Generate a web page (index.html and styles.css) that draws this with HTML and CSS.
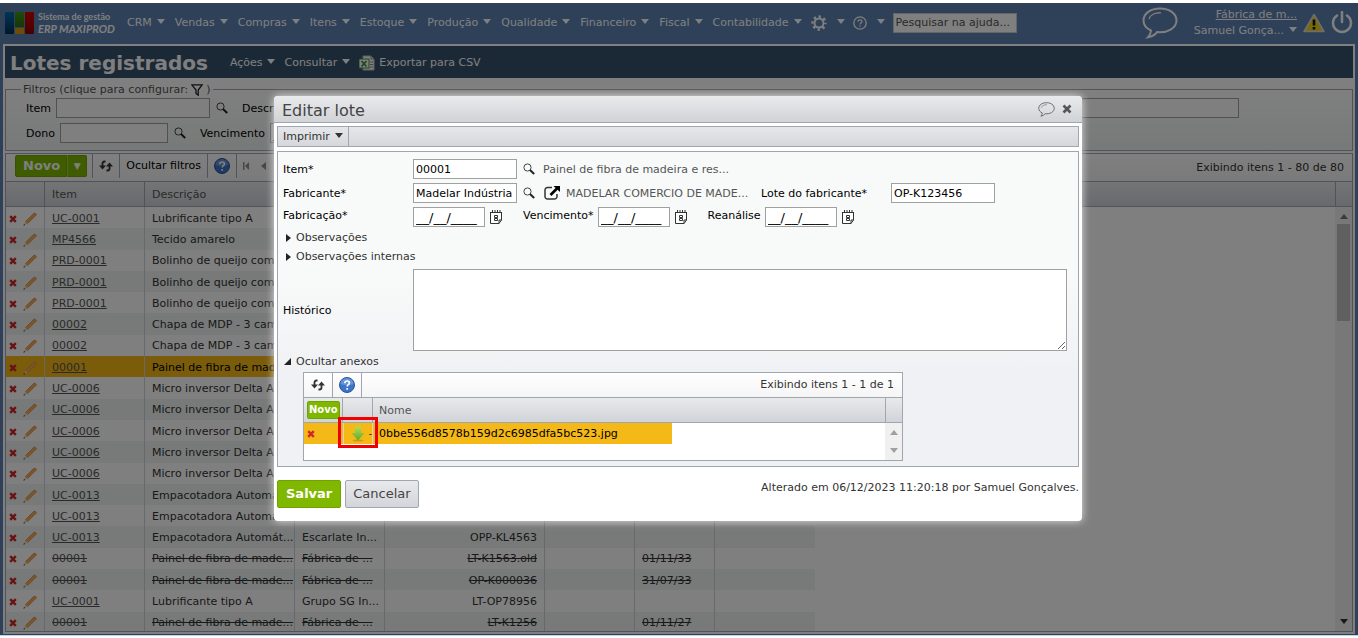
FILE: index.html
```html
<!DOCTYPE html>
<html lang="pt-BR">
<head>
  <meta charset="UTF-8">
  <meta name="viewport" content="width=device-width, initial-scale=1.0">
  <title>Lotes registrados</title>
  <link rel="stylesheet" href="styles.css">
</head>
<body>
  <svg class="sprite" aria-hidden="true">
    <symbol id="i-search" viewBox="0 0 12 12"><circle cx="4.5" cy="4.5" r="3.6" fill="none" stroke="#444" stroke-width="1"/><path d="M7 7l4.200 4" stroke="#222" stroke-width="2"/></symbol>
    <symbol id="i-refresh" viewBox="0 0 14 12"><path d="M6.500 1.500H5.500C4 1.500 3.500 2.300 3.500 3.500V7M7.500 10.500h1c1.500 0 2-.8 2-2V5" fill="none" stroke="#333" stroke-width="1.800"/><path d="M0 5.500h7L3.500 9.500zM7 6.500h7L10.500 2.500z" fill="#333"/></symbol>
    <symbol id="i-help" viewBox="0 0 16 16"><circle cx="8" cy="8" r="7.500" fill="#3b74c9" stroke="#2a5396"/><path d="M1.500 7a6.500 6 0 0 1 13 0c-3 1.500-10 1.500-13 0z" fill="#82a9e4" opacity=".6"/><path d="M5.800 6.200c0-3 4.600-2.800 4.600-.2 0 1.700-2.200 1.700-2.200 3.500M8.200 11v1.800" fill="none" stroke="#fff" stroke-width="1.700"/></symbol>
    <symbol id="i-x" viewBox="0 0 8 8"><path d="M1.200 1.200l5.600 5.600M6.800 1.200L1.200 6.800" stroke="#d02828" stroke-width="2.400"/></symbol>
    <symbol id="i-pencil" viewBox="0 0 14 14"><path d="M2.500 9.500L10.500 1.500Q12 .5 13 2t-.7 2L4.700 11.500z" fill="#f2a85a" stroke="#d98a3a" stroke-width=".7"/><path d="M2.500 9.500L.8 13.200l3.900-1.700z" fill="#f2d3a0"/><path d="M.5 13.700l.5-1.700 1.200 1z" fill="#333"/></symbol>
    <symbol id="i-cal" viewBox="0 0 12 14"><path d="M.5 2.500h11V10L9 13.500H.5z" fill="#fff" stroke="#333"/><path d="M11.500 10H9v3.500" fill="none" stroke="#333"/><path d="M0 2.500h12M2.500 0v3M5 0v2M7.500 0v2M10 0v3" stroke="#333"/><path d="M4.500 5.500h3v2h-3zM4.500 8.500h3v2h-3z" fill="none" stroke="#333"/></symbol>
    <symbol id="i-bubble" viewBox="0 0 36 32"><path d="M18 1.500C8.500 1.500 1.500 6.500 1.500 13.500c0 4.500 3 8 7.500 10-.3 2.600-1.200 5-3 6.800 4-.7 7-2.500 9-5.200 10.500 1 19.500-4 19.500-11.600C34.500 6.500 27.500 1.500 18 1.500z" fill="none" stroke="currentColor" stroke-width="2"/><path d="M7 12c1-4 6-6.500 12-6.200" fill="none" stroke="currentColor" stroke-width="1.300"/></symbol>
  </svg>

  <div class="app">
    <header class="topbar">
      <a class="logo" href="#">
        <svg width="30" height="22" viewBox="0 0 30 22">
          <defs>
            <linearGradient id="lb" x2="0" y2="1"><stop stop-color="#006cb0"/><stop offset="1" stop-color="#003050"/></linearGradient>
            <linearGradient id="lr" x2="0" y2="1"><stop stop-color="#d40000"/><stop offset="1" stop-color="#8c0000"/></linearGradient>
            <linearGradient id="lg" x2="0" y2="1"><stop stop-color="#3f9a10"/><stop offset="1" stop-color="#2a6c10"/></linearGradient>
          </defs>
          <rect width="9" height="22" rx="1" fill="url(#lb)"/><rect x="10" width="9" height="15" rx="1" fill="url(#lg)"/><rect x="10" y="16" width="9" height="6" rx="1" fill="#d79a10"/><rect x="20" width="9" height="22" rx="1" fill="url(#lr)"/>
        </svg>
        <span class="logo-text">Sistema de gestão<em>ERP MAXIPROD</em></span>
      </a>
      <nav class="menu">
        <a class="caret" href="#">CRM</a>
        <a class="caret" href="#">Vendas</a>
        <a class="caret" href="#">Compras</a>
        <a class="caret" href="#">Itens</a>
        <a class="caret" href="#">Estoque</a>
        <a class="caret" href="#">Produção</a>
        <a class="caret" href="#">Qualidade</a>
        <a class="caret" href="#">Financeiro</a>
        <a class="caret" href="#">Fiscal</a>
        <a class="caret" href="#">Contabilidade</a>
      </nav>
      <div class="tools">
        <a class="caret" href="#" aria-label="Configurações"><svg width="16" height="16" viewBox="0 0 16 16"><circle cx="8" cy="8" r="4.500" fill="none" stroke="#fff" stroke-width="2"/><circle cx="8" cy="8" r="6.500" fill="none" stroke="#fff" stroke-width="2.400" stroke-dasharray="2.400 2.705" stroke-dashoffset="1.200"/></svg></a>
        <a class="caret" href="#" aria-label="Ajuda"><svg width="14" height="14" viewBox="0 0 14 14"><circle cx="7" cy="7" r="6.200" fill="none" stroke="#fff" stroke-width="1.300"/><path d="M5 5.700c0-2.500 4-2.300 4-.1C9 7 7 7 7 8.500M7 9.500v1.300" fill="none" stroke="#fff" stroke-width="1.200"/></svg></a>
        <input class="help-search" type="text" value="Pesquisar na ajuda..." aria-label="Pesquisar na ajuda">
      </div>
      <div class="account">
        <svg class="chat" width="36" height="32"><use href="#i-bubble"/></svg>
        <div class="user">
          <a class="company" href="#">Fábrica de m...</a>
          <a class="caret" href="#">Samuel Gonça...</a>
        </div>
        <svg width="22" height="20" viewBox="0 0 22 20"><path d="M11 1.500L21 18.500H1z" fill="#f2d21c" stroke="#ddd" stroke-width="1.500" stroke-linejoin="round"/><path d="M11 6.500v6M11 14v2.500" stroke="#111" stroke-width="2.600"/></svg>
        <svg width="22" height="24" viewBox="0 0 22 24"><path d="M6 4.500a9 9 0 1 0 10 0M11 1v10" fill="none" stroke="#fff" stroke-width="2.500" stroke-linecap="round"/></svg>
      </div>
    </header>

    <main class="page">
      <div class="titlebar">
        <h1>Lotes registrados</h1>
        <a class="caret" href="#">Ações</a>
        <a class="caret" href="#">Consultar</a>
        <a class="export" href="#"><svg width="16" height="16" viewBox="0 0 16 16"><path d="M4 1h8l3 3v11H4z" fill="#fff" stroke="#bbb"/><path d="M12 1v3h3M11 7h3M11 9.500h3M11 12h3" fill="none" stroke="#888"/><rect y="4" width="10" height="9" fill="#fff" stroke="#3f8f3a"/><path d="M2.500 6l5 5.500M7.500 6l-5 5.500" stroke="#3f8f3a" stroke-width="1.800"/></svg>Exportar para CSV</a>
      </div>

      <fieldset class="filters">
        <legend>Filtros (clique para configurar: <svg width="12" height="12" viewBox="0 0 12 12"><path d="M.8.800h10.400L7.200 6v5.200L5 9.500V6z" fill="none" stroke="#222" stroke-width="1.300"/></svg> )</legend>
        <div class="filter-row">
          <label for="fItem">Item</label>
          <input id="fItem" class="w-item" type="text">
          <svg class="lens" width="12" height="12"><use href="#i-search"/></svg>
          <label for="fDesc" class="next">Descrição</label>
          <input id="fDesc" class="w-desc" type="text">
        </div>
        <div class="filter-row">
          <label for="fDono">Dono</label>
          <input id="fDono" class="w-dono" type="text">
          <svg class="lens" width="12" height="12"><use href="#i-search"/></svg>
          <label for="fVenc" class="next">Vencimento</label>
          <input id="fVenc" class="date" type="text" value="__/__/____">
        </div>
      </fieldset>

      <section class="grid">
        <div class="grid-tools">
          <div class="tool split"><button type="button" class="novo">Novo</button><button type="button" class="novo more" aria-label="Mais opções">▼</button></div>
          <button type="button" class="tool" aria-label="Atualizar"><svg width="14" height="12"><use href="#i-refresh"/></svg></button>
          <button type="button" class="tool">Ocultar filtros</button>
          <button type="button" class="tool" aria-label="Ajuda"><svg width="16" height="16"><use href="#i-help"/></svg></button>
          <button type="button" class="tool pager" aria-label="Página anterior"><svg width="24" height="8" viewBox="0 0 24 8"><path d="M0 0h1.500v8H0zM6 0v8L2 4zM23 0v8L18 4z" fill="#8a8f98"/></svg></button>
          <span class="count">Exibindo itens 1 - 80 de 80</span>
        </div>
        <div class="grid-head">
          <span class="c-act"></span><span class="c-item">Item</span><span class="c-desc">Descrição</span><span class="c-rest"></span><span class="c-bar"></span>
        </div>
        <div class="grid-body">
          <div class="rows">
            <table class="lots">
              <colgroup><col class="c-act"><col class="c-item"><col class="c-desc"><col class="c-maker"><col class="c-lot"><col class="c-made"><col class="c-due"><col class="c-check"></colgroup>
              <tbody id="lots"></tbody>
            </table>
          </div>
          <div class="scroll">
            <svg width="8" height="5" viewBox="0 0 8 5"><path d="M0 5h8L4 0z" fill="#777"/></svg>
            <div class="thumb"></div>
            <svg width="8" height="5" viewBox="0 0 8 5"><path d="M0 0h8L4 5z" fill="#333"/></svg>
          </div>
        </div>
      </section>
    </main>

    <div class="overlay"></div>

    <form class="dialog" role="dialog" aria-labelledby="dlgTitle">
      <div class="dialog-head">
        <h2 id="dlgTitle">Editar lote</h2>
        <svg class="comment" width="17" height="15"><use href="#i-bubble"/></svg>
        <button type="button" class="plain" aria-label="Fechar"><svg width="10" height="10" viewBox="0 0 10 10"><path d="M1.500 1.500l7 7M8.500 1.500l-7 7" stroke="#555" stroke-width="2.600"/></svg></button>
      </div>
      <div class="dialog-tools"><button type="button" class="caret">Imprimir</button></div>

      <div class="panel">
        <div class="field">
          <label for="item">Item*</label>
          <input id="item" class="w-std" type="text" value="00001">
          <svg class="lens" width="12" height="12"><use href="#i-search"/></svg>
          <span class="info">Painel de fibra de madeira e res...</span>
        </div>
        <div class="field">
          <label for="maker">Fabricante*</label>
          <input id="maker" class="w-std" type="text" value="Madelar Indústria">
          <svg class="lens" width="12" height="12"><use href="#i-search"/></svg>
          <svg class="open" width="16" height="14" viewBox="0 0 16 14"><path d="M8 1.500H3.500a2.500 2.500 0 0 0-2.500 2.500v6.500A2.500 2.500 0 0 0 3.500 13h7a2.500 2.500 0 0 0 2.500-2.500V8" fill="none" stroke="#333" stroke-width="1.500"/><path d="M6.500 9L13 2.500" stroke="#000" stroke-width="2.600"/><path d="M9.500 0H16v6z" fill="#000"/></svg>
          <span class="maker-name">MADELAR COMERCIO DE MADE...</span>
          <label for="lot" class="lot-label">Lote do fabricante*</label>
          <input id="lot" class="w-std" type="text" value="OP-K123456">
        </div>
        <div class="field dates">
          <label for="made">Fabricação*</label>
          <input id="made" class="date" type="text" value="__/__/____">
          <svg class="cal" width="12" height="14"><use href="#i-cal"/></svg>
          <label for="due" class="side">Vencimento*</label>
          <input id="due" class="date" type="text" value="__/__/____">
          <svg class="cal" width="12" height="14"><use href="#i-cal"/></svg>
          <label for="check" class="side">Reanálise</label>
          <input id="check" class="date" type="text" value="__/__/____">
          <svg class="cal" width="12" height="14"><use href="#i-cal"/></svg>
        </div>
        <button type="button" class="fold">Observações</button>
        <button type="button" class="fold">Observações internas</button>
        <div class="field history">
          <label for="hist">Histórico</label>
          <textarea id="hist"></textarea>
        </div>
        <button type="button" class="fold is-open">Ocultar anexos</button>

        <section class="files">
          <div class="files-tools">
            <button type="button" class="tool" aria-label="Atualizar"><svg width="14" height="12"><use href="#i-refresh"/></svg></button>
            <button type="button" class="tool" aria-label="Ajuda"><svg width="16" height="16"><use href="#i-help"/></svg></button>
            <span class="count">Exibindo itens 1 - 1 de 1</span>
          </div>
          <div class="files-head">
            <span class="f-new"><button type="button" class="novo small">Novo</button></span><span class="f-down"></span><span class="f-name">Nome</span><span class="c-bar"></span>
          </div>
          <div class="files-body">
            <div class="file-row">
              <span class="f-new"><button type="button" class="plain" aria-label="Excluir"><svg width="8" height="8"><use href="#i-x"/></svg></button></span>
              <span class="f-down">
                <button type="button" class="plain" aria-label="Baixar"><svg width="14" height="16" viewBox="0 0 14 16"><defs><linearGradient id="dl" x2="0" y2="1"><stop stop-color="#b5dc52"/><stop offset="1" stop-color="#5fa82d"/></linearGradient></defs><ellipse cx="7" cy="14.500" rx="5.500" ry="1" fill="#c79a20"/><path d="M4 .5h6v6.500h3.500L7 14.500.5 7H4z" fill="url(#dl)"/></svg></button>
                <i class="dash">-</i>
                <i class="marker"></i>
              </span>
              <span class="f-name">0bbe556d8578b159d2c6985dfa5bc523.jpg</span>
            </div>
            <div class="scroll">
              <svg width="8" height="5" viewBox="0 0 8 5"><path d="M0 5h8L4 0z" fill="#a0a0a0"/></svg>
              <svg width="8" height="5" viewBox="0 0 8 5"><path d="M0 0h8L4 5z" fill="#a0a0a0"/></svg>
            </div>
          </div>
        </section>
      </div>

      <div class="dialog-foot">
        <button type="submit" class="btn save">Salvar</button>
        <button type="button" class="btn">Cancelar</button>
        <span class="changed">Alterado em 06/12/2023 11:20:18 por Samuel Gonçalves.</span>
      </div>
    </form>
  </div>

  <script>
    // item, description, maker, maker lot, manufactured, due, re-check, state
    const lots = [
      ['UC-0001', 'Lubrificante tipo A'],
      ['MP4566', 'Tecido amarelo'],
      ['PRD-0001', 'Bolinho de queijo com'],
      ['PRD-0001', 'Bolinho de queijo com'],
      ['PRD-0001', 'Bolinho de queijo com'],
      ['00002', 'Chapa de MDP - 3 cam'],
      ['00002', 'Chapa de MDP - 3 cam'],
      ['00001', 'Painel de fibra de made...', '', '', '', '', '', 'selected'],
      ['UC-0006', 'Micro inversor Delta A'],
      ['UC-0006', 'Micro inversor Delta A'],
      ['UC-0006', 'Micro inversor Delta A'],
      ['UC-0006', 'Micro inversor Delta A'],
      ['UC-0006', 'Micro inversor Delta A'],
      ['UC-0013', 'Empacotadora Automát...'],
      ['UC-0013', 'Empacotadora Automát...'],
      ['UC-0013', 'Empacotadora Automát...', 'Escarlate In...', 'OPP-KL4563'],
      ['00001', 'Painel de fibra de made...', 'Fábrica de ...', 'LT-K1563.old', '', '01/11/33', '', 'inactive'],
      ['00001', 'Painel de fibra de made...', 'Fábrica de ...', 'OP-K000036', '', '31/07/33', '', 'inactive'],
      ['UC-0001', 'Lubrificante tipo A', 'Grupo SG In...', 'LT-OP78956'],
      ['00001', 'Painel de fibra de made...', 'Fábrica de ...', 'LT-K1256', '', '01/11/27', '', 'inactive']
    ];

    document.getElementById('lots').innerHTML = lots.map(r => `
      <tr class="${r[7] || ''}">
        <td class="act"><div>
          <button type="button" class="plain" aria-label="Excluir"><svg width="8" height="8"><use href="#i-x"/></svg></button>
          <button type="button" class="plain" aria-label="Editar"><svg width="14" height="14"><use href="#i-pencil"/></svg></button>
        </div></td>
        <td><a href="#">${r[0]}</a></td>
        <td>${r[1]}</td>
        <td>${r[2] || ''}</td>
        <td class="num">${r[3] || ''}</td>
        <td>${r[4] || ''}</td>
        <td>${r[5] || ''}</td>
        <td>${r[6] || ''}</td>
      </tr>`).join('');
  </script>
</body>
</html>
```
FILE: styles.css
```css
* {
  box-sizing: border-box;
}

body {
  margin: 0;
  padding: 3px 0 2px;
  height: 100vh;
  overflow: hidden;
  background: #fff;
  color: #333;
  font: 11px/16px "DejaVu Sans", Verdana, sans-serif;
}

button,
input,
textarea {
  font: inherit;
  color: inherit;
}

a {
  color: inherit;
  text-decoration: none;
}

svg {
  display: block;
  flex: none;
}

.sprite {
  position: absolute;
  width: 0;
  height: 0;
}

.app {
  position: relative;
  height: 100%;
  display: flex;
  flex-direction: column;
  background: #5c82b2;
  border-bottom: 1px solid #c4d2e6;
}

.caret {
  display: inline-flex;
  align-items: center;
  gap: 5px;
  white-space: nowrap;
}

.caret::after {
  content: "";
  border: 4px solid transparent;
  border-top: 5px solid currentColor;
  border-bottom: 0;
  margin-bottom: 3px;
}

.plain {
  border: 0;
  padding: 0;
  background: none;
}

/* top bar */
.topbar {
  height: 41px;
  flex: none;
  display: flex;
  align-items: center;
  padding: 0 5px 2px;
  color: #fff;
}

.logo {
  display: flex;
  align-items: center;
  gap: 3px;
  width: 122px;
}

.logo-text {
  font: bold 9px/12px Lato, sans-serif;
  white-space: nowrap;
}

.logo-text em {
  display: block;
  font-size: 11px;
}

.menu {
  display: flex;
  gap: 10px;
}

.tools {
  display: flex;
  align-items: center;
  gap: 8px;
  margin-left: 9px;
}

.tools .caret {
  gap: 10px;
}

.help-search {
  width: 124px;
  height: 20px;
  padding: 0 2px;
  border: 1px solid #ccc;
  background: #fff;
  color: #555;
}

.account {
  display: flex;
  align-items: center;
  gap: 6px;
  margin-left: auto;
}

.chat {
  margin-right: 10px;
}

.user {
  display: flex;
  flex-direction: column;
  align-items: flex-end;
}

.company {
  text-decoration: underline;
}

/* page */
.page {
  flex: 1;
  min-height: 0;
  margin: 0 3px 1px;
  border: 2px solid #fff;
  background: #fff;
  display: flex;
  flex-direction: column;
}

.titlebar {
  display: flex;
  align-items: center;
  gap: 9px;
  height: 32px;
  flex: none;
  padding: 2px 5px 0;
  background: #36526e;
  color: #fff;
}

.titlebar h1 {
  margin: 0 13px 0 0;
  font-size: 20px;
  line-height: 30px;
}

.export {
  display: flex;
  align-items: center;
  gap: 4px;
}

.filters {
  min-width: 0;
  margin: 2px 0;
  padding: 0 20px 7px;
  border: 1px solid #a0a6b0;
  background: linear-gradient(#fff, #eff4f3);
}

.filters legend {
  display: flex;
  align-items: center;
  gap: 3px;
  margin-left: -5px;
  padding: 2px 2px 0;
  color: #555;
}

.filter-row {
  display: flex;
  align-items: center;
  color: #000;
}

.filter-row + .filter-row {
  margin-top: 5px;
}

.filter-row label,
.field label,
.info,
.maker-name {
  padding-top: 2px;
}

.filter-row input,
.field input,
.field textarea {
  height: 20px;
  border: 1px solid #a0a0a0;
  background: #fff;
  color: #000;
  padding: 0 2px;
}

.filter-row input {
  margin-left: 5px;
}

.filter-row .next {
  margin-left: 14px;
}

.lens {
  margin-left: 6px;
}

.w-item {
  width: 154px;
}

.w-dono {
  width: 108px;
}

.w-desc {
  width: 938px;
}

.filter-row .date,
.field .date {
  width: 72px;
  font-size: 13px;
}

/* grid */
.grid {
  flex: 1;
  min-height: 0;
  display: flex;
  flex-direction: column;
  border: 1px solid #a0a6b0;
}

.grid-tools,
.files-tools {
  display: flex;
  align-items: center;
  flex: none;
  height: 27px;
  background: linear-gradient(#fff, #f4f5f4);
}

.tool {
  display: flex;
  align-items: center;
  height: 24px;
  padding: 0 6px;
  border: 0;
  border-right: 1px solid #a0a6b0;
  background: none;
  color: #000;
  align-self: flex-start;
}

.grid-tools .split {
  padding: 0 5px 0 9px;
}

.grid-tools .pager {
  border: 0;
}

.novo {
  height: 22px;
  padding: 0 6px 0 7px;
  border: 1px solid #6fa400;
  border-radius: 2px 0 0 2px;
  background: #80b800;
  color: #fff;
  font-size: 13px;
  font-weight: bold;
  line-height: 20px;
}

.novo.more {
  width: 20px;
  padding: 0;
  border-left: 1px solid #a5d040;
  border-radius: 0 2px 2px 0;
  font-size: 9px;
}

.novo.small {
  height: 18px;
  padding: 0 1px;
  border-radius: 2px;
  font-size: 10px;
  line-height: 16px;
}

.count {
  margin-left: auto;
  padding-right: 8px;
  color: #333;
}

.grid-head,
.files-head {
  display: flex;
  flex: none;
  height: 26px;
  border: 1px solid #a0a6b0;
  border-width: 1px 0;
  background: linear-gradient(#e8e9eb, #d0d3d8);
  line-height: 25px;
  color: #555;
}

.grid-head span {
  padding-left: 7px;
  border-right: 1px solid #a0a6b0;
}

.grid-head .c-bar,
.files-head .c-bar {
  border-right: 0;
}

.c-act { width: 39px; }
.c-item { width: 100px; }
.c-desc { width: 150px; }
.c-maker { width: 90px; }
.c-lot { width: 160px; }
.c-made { width: 90px; }
.c-due { width: 80px; }
.c-check { width: 100px; }
.c-rest { flex: 1; }
.c-bar { width: 16px; }

.grid-head .c-desc {
  border-right: 0;
}

.grid-body {
  flex: 1;
  min-height: 0;
  display: flex;
}

.rows {
  flex: 1;
  overflow: hidden;
}

.lots {
  width: 809px;
  height: 426px;
  table-layout: fixed;
  border-collapse: separate;
  border-spacing: 0;
}

.lots td {
  padding: 2px 0 0 7px;
  border-right: 1px solid #d0d3d8;
  overflow: hidden;
  text-overflow: ellipsis;
  white-space: nowrap;
}

.lots td:last-child {
  border-right: 0;
}

.lots .act {
  padding-left: 3px;
}

.act div {
  display: flex;
  align-items: center;
  gap: 6px;
}

.lots .num {
  padding-right: 7px;
  text-align: right;
}

.lots a {
  color: #555;
  text-decoration: underline;
}

.lots tr:nth-child(even) {
  background: #eef4f2;
}

.lots .selected,
.lots .selected:nth-child(even) {
  background: #f4b817;
  color: #000;
}

.lots .inactive td,
.lots .inactive a {
  text-decoration: line-through;
}

.scroll {
  width: 17px;
  display: flex;
  flex-direction: column;
  align-items: center;
  padding: 7px 0;
  background: #f0f0f0;
}

.scroll svg:last-child {
  margin-top: auto;
}

.thumb {
  width: 13px;
  height: 97px;
  margin-top: 5px;
  background: #c0c0c0;
}

.overlay {
  position: absolute;
  inset: 0;
  background: rgba(0, 0, 0, 0.5);
}

/* dialog */
.dialog {
  position: absolute;
  top: 93px;
  left: 0;
  right: 2px;
  width: 808px;
  max-width: 100%;
  margin: 0 auto;
  border-radius: 4px;
  background: #fff;
  box-shadow: 0 0 8px rgba(255, 255, 255, 0.8);
}

.dialog-head {
  display: flex;
  align-items: center;
  gap: 7px;
  height: 27px;
  padding: 0 10px 0 8px;
  border-bottom: 1px solid #a0a6b0;
  border-radius: 4px 4px 0 0;
  background: linear-gradient(#e9eaec, #d0d3d7);
}

.dialog-head h2 {
  flex: 1;
  margin: 0;
  padding-top: 4px;
  font-size: 16px;
  line-height: 22px;
  font-weight: normal;
  color: #444;
}

.comment {
  color: #666;
}

.dialog-tools {
  display: flex;
  height: 21px;
  margin: 3px 3px 4px;
  border: 1px solid #a0a6b0;
  background: linear-gradient(#e6e7ea, #d5d7db);
}

.dialog-tools button {
  padding: 1px 5px 0;
  border: 0;
  border-right: 1px solid #a0a6b0;
  background: none;
}

.panel {
  margin: 0 3px;
  padding: 7px 5px 5px;
  border: 1px solid #a0a6b0;
  background: linear-gradient(#f8faf9 40%, #eff1f4 70%);
}

.field {
  display: flex;
  align-items: center;
  margin-bottom: 4px;
  color: #000;
}

.field label:first-child {
  width: 130px;
}

.w-std {
  width: 104px;
}

.info {
  margin-left: 8px;
  color: #555;
}

.open {
  margin: 0 6px 0 9px;
}

.maker-name {
  width: 195px;
  color: #555;
  white-space: nowrap;
}

.lot-label {
  width: 130px;
}

.dates {
  margin-bottom: 1px;
}

.dates label {
  padding: 0 0 3px;
}

.cal {
  margin-left: 5px;
}

.side {
  margin: 0 4px 0 21px;
}

.fold {
  display: flex;
  align-items: center;
  height: 19px;
  padding: 0 3px;
  border: 0;
  background: none;
  gap: 5px;
}

.fold::before {
  content: "";
  border: 4px solid transparent;
  border-left: 5px solid #222;
  border-right: 0;
}

.fold.is-open::before {
  border: 0;
  border-left: 7px solid transparent;
  border-bottom: 7px solid #222;
}

.fold.is-open {
  padding-left: 1px;
}

.history {
  margin: 3px 6px 1px 0;
}

.field textarea {
  flex: 1;
  height: 82px;
  resize: both;
}

/* attachments */
.files {
  width: 600px;
  margin: 1px 0 0 20px;
  border: 1px solid #a0a6b0;
  background: #fff;
}

.files-tools {
  height: 24px;
}

.files-tools .tool {
  padding: 0 7px;
}

.files-tools .tool + .tool {
  padding: 0 6px;
}

.files-head .f-new,
.files-head .f-down,
.files-head .f-name {
  border-right: 1px solid #a0a6b0;
}

.f-new {
  display: flex;
  align-items: center;
  width: 39px;
  padding-left: 3px;
}

.f-down {
  width: 30px;
}

.f-name {
  flex: 1;
  padding-left: 6px;
}

.files-body {
  display: flex;
  height: 37px;
  justify-content: space-between;
  align-items: flex-start;
}

.file-row {
  display: flex;
  align-items: center;
  width: 368px;
  height: 21px;
  background: #f4b817;
  color: #000;
}

.file-row .f-down {
  position: relative;
  display: flex;
  justify-content: center;
  align-items: center;
  height: 21px;
  border: 1px solid #d0d3d8;
  border-width: 0 1px;
}

.dash {
  position: absolute;
  right: 0;
  font-style: normal;
  font-size: 9px;
}

/* call-out frame round the download button */
.marker {
  position: absolute;
  inset: -6px -6px -4px -6px;
  border: 3px solid #f00000;
}

.files-body .scroll {
  height: 37px;
}

.dialog-foot {
  display: flex;
  gap: 4px;
  padding: 13px 3px;
}

.btn {
  height: 28px;
  padding: 0 7px;
  border: 1px solid #a0a6b0;
  border-radius: 2px;
  background: linear-gradient(#e8e9eb, #d3d5da);
  color: #444;
  font-size: 13px;
}

.btn.save {
  padding: 0 8px;
  border-color: #6fa400;
  background: #80b800;
  color: #fff;
  font-weight: bold;
}

.changed {
  margin-left: auto;
}
```
